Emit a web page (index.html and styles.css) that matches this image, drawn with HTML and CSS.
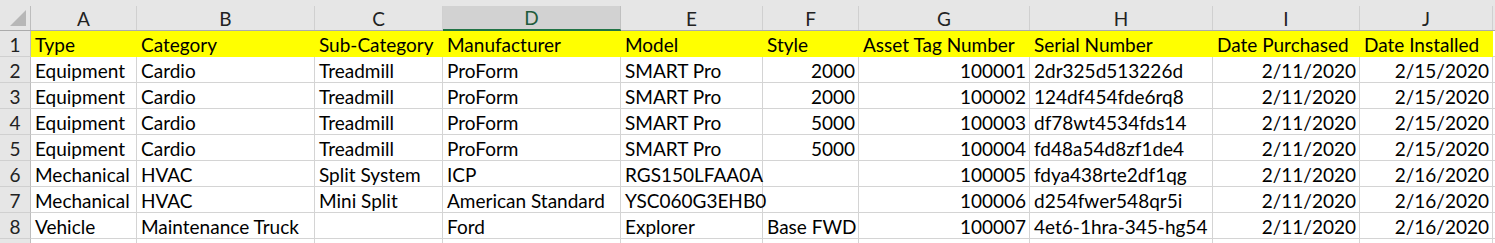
FILE: index.html
```html
<!DOCTYPE html>
<html>
<head>
<meta charset="utf-8">
<link rel="stylesheet" href="styles.css">
</head>
<body>
<div class="sheet">
  <div class="ch corner"><span><i class="tri"></i></span></div>
  <div class="ch"><span>A</span></div>
  <div class="ch"><span>B</span></div>
  <div class="ch"><span>C</span></div>
  <div class="ch sel"><span>D</span></div>
  <div class="ch"><span>E</span></div>
  <div class="ch"><span>F</span></div>
  <div class="ch"><span>G</span></div>
  <div class="ch"><span>H</span></div>
  <div class="ch"><span>I</span></div>
  <div class="ch"><span>J</span></div>
  <div class="ch"><span></span></div>

  <div class="rh">1</div>
  <div class="c y">Type</div>
  <div class="c y">Category</div>
  <div class="c y">Sub-Category</div>
  <div class="c y">Manufacturer</div>
  <div class="c y">Model</div>
  <div class="c y">Style</div>
  <div class="c y">Asset Tag Number</div>
  <div class="c y">Serial Number</div>
  <div class="c y">Date Purchased</div>
  <div class="c y">Date Installed</div>
  <div class="c"></div>

  <div class="rh">2</div>
  <div class="c">Equipment</div>
  <div class="c">Cardio</div>
  <div class="c">Treadmill</div>
  <div class="c">ProForm</div>
  <div class="c">SMART Pro</div>
  <div class="c n">2000</div>
  <div class="c n">100001</div>
  <div class="c">2dr325d513226d</div>
  <div class="c n">2/11/2020</div>
  <div class="c n">2/15/2020</div>
  <div class="c"></div>

  <div class="rh">3</div>
  <div class="c">Equipment</div>
  <div class="c">Cardio</div>
  <div class="c">Treadmill</div>
  <div class="c">ProForm</div>
  <div class="c">SMART Pro</div>
  <div class="c n">2000</div>
  <div class="c n">100002</div>
  <div class="c">124df454fde6rq8</div>
  <div class="c n">2/11/2020</div>
  <div class="c n">2/15/2020</div>
  <div class="c"></div>

  <div class="rh">4</div>
  <div class="c">Equipment</div>
  <div class="c">Cardio</div>
  <div class="c">Treadmill</div>
  <div class="c">ProForm</div>
  <div class="c">SMART Pro</div>
  <div class="c n">5000</div>
  <div class="c n">100003</div>
  <div class="c">df78wt4534fds14</div>
  <div class="c n">2/11/2020</div>
  <div class="c n">2/15/2020</div>
  <div class="c"></div>

  <div class="rh">5</div>
  <div class="c">Equipment</div>
  <div class="c">Cardio</div>
  <div class="c">Treadmill</div>
  <div class="c">ProForm</div>
  <div class="c">SMART Pro</div>
  <div class="c n">5000</div>
  <div class="c n">100004</div>
  <div class="c">fd48a54d8zf1de4</div>
  <div class="c n">2/11/2020</div>
  <div class="c n">2/15/2020</div>
  <div class="c"></div>

  <div class="rh">6</div>
  <div class="c">Mechanical</div>
  <div class="c">HVAC</div>
  <div class="c">Split System</div>
  <div class="c">ICP</div>
  <div class="c">RGS150LFAA0A</div>
  <div class="c"></div>
  <div class="c n">100005</div>
  <div class="c">fdya438rte2df1qg</div>
  <div class="c n">2/11/2020</div>
  <div class="c n">2/16/2020</div>
  <div class="c"></div>

  <div class="rh">7</div>
  <div class="c">Mechanical</div>
  <div class="c">HVAC</div>
  <div class="c">Mini Split</div>
  <div class="c">American Standard</div>
  <div class="c">YSC060G3EHB0</div>
  <div class="c"></div>
  <div class="c n">100006</div>
  <div class="c">d254fwer548qr5i</div>
  <div class="c n">2/11/2020</div>
  <div class="c n">2/16/2020</div>
  <div class="c"></div>

  <div class="rh">8</div>
  <div class="c">Vehicle</div>
  <div class="c">Maintenance Truck</div>
  <div class="c"></div>
  <div class="c">Ford</div>
  <div class="c">Explorer</div>
  <div class="c">Base FWD</div>
  <div class="c n">100007</div>
  <div class="c">4et6-1hra-345-hg54</div>
  <div class="c n">2/11/2020</div>
  <div class="c n">2/16/2020</div>
  <div class="c"></div>

  <div class="rh"></div>
  <div class="c"></div>
  <div class="c"></div>
  <div class="c"></div>
  <div class="c"></div>
  <div class="c"></div>
  <div class="c"></div>
  <div class="c"></div>
  <div class="c"></div>
  <div class="c"></div>
  <div class="c"></div>
  <div class="c"></div>
</div>
</body>
</html>
```
FILE: styles.css
```css
html, body {
  margin: 0;
  padding: 0;
  background: #ffffff;
  overflow: hidden;
}

.sheet {
  display: grid;
  grid-template-columns: 31px 106px 178px 128px 178px 142px 96px 171px 183px 147px 133px 1fr;
  grid-template-rows: 31px repeat(9, 26px);
  font-family: Lato, "Liberation Sans", sans-serif;
  font-size: 19px;
  color: #000;
}

.ch {
  background: #e6e6e6;
  padding-top: 6px;
  border-bottom: 1px solid #ababab;
  box-sizing: border-box;
  display: flex;
}

.ch > span {
  flex: 1;
  display: flex;
  align-items: center;
  justify-content: center;
  border-right: 1px solid #d0d0d0;
  color: #222;
  position: relative;
}

.ch.corner > span {
  border-right-color: #bdbdbd;
}

.tri {
  position: absolute;
  right: 4px;
  bottom: 4px;
  width: 0;
  height: 0;
  border-left: 16px solid transparent;
  border-bottom: 16px solid #b7b7b7;
}

.ch.sel {
  border-bottom-color: #217346;
}

.ch.sel > span {
  background: #d2d2d2;
  color: #1e5c3c;
  border-bottom: 1px solid #217346;
  border-right-color: #c0c0c0;
}

.rh {
  background: #e6e6e6;
  color: #222;
  border-right: 1px solid #bdbdbd;
  border-bottom: 1px solid #d0d0d0;
  box-sizing: border-box;
  display: flex;
  align-items: center;
  justify-content: center;
  padding-top: 1px;
}

.c {
  border-right: 1px solid #d4d4d4;
  border-bottom: 1px solid #d4d4d4;
  box-sizing: border-box;
  padding: 1px 3px 0 4px;
  display: flex;
  align-items: center;
  white-space: nowrap;
}

.c.n {
  justify-content: flex-end;
}

.c.y {
  background: #ffff00;
  border-right-color: #ffff00;
  border-bottom-color: #ffff00;
}
```
